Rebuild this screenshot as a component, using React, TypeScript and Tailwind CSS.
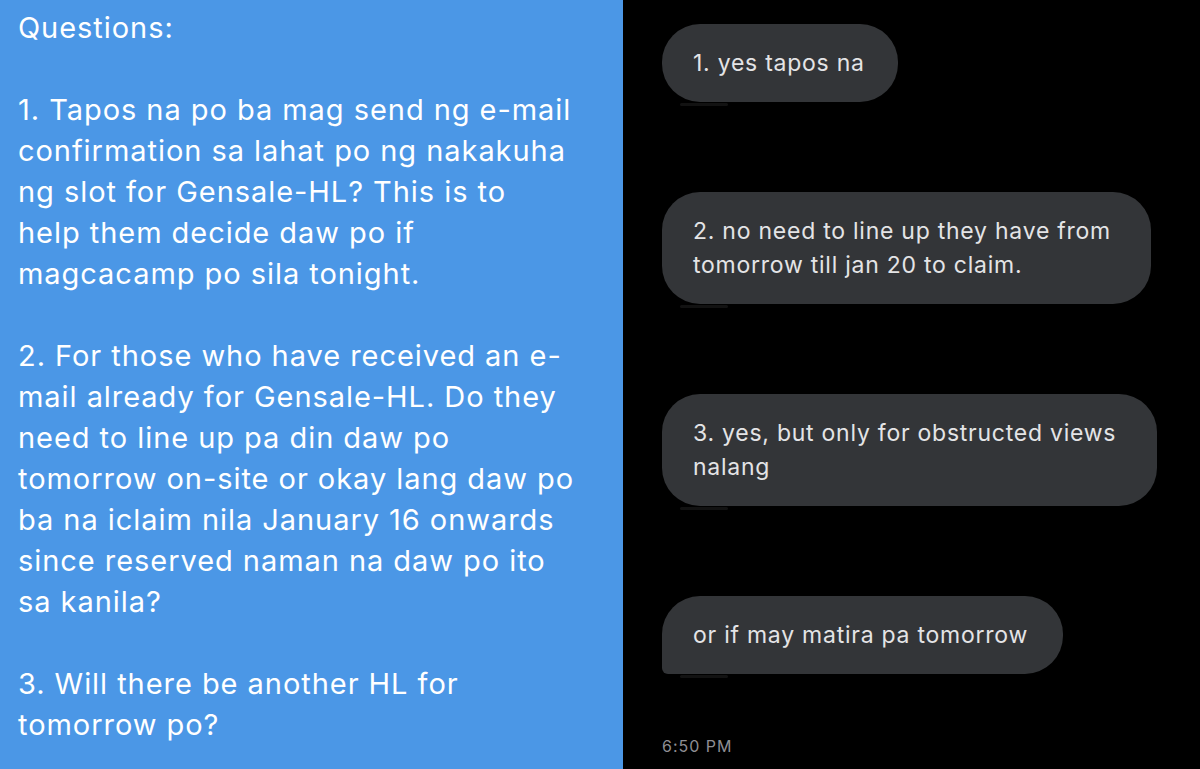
import React from "react";

const leftLines = [
  "Questions:",
  "",
  "1. Tapos na po ba mag send ng e-mail",
  "confirmation sa lahat po ng nakakuha",
  "ng slot for Gensale-HL? This is to",
  "help them decide daw po if",
  "magcacamp po sila tonight.",
  "",
  "2. For those who have received an e-",
  "mail already for Gensale-HL. Do they",
  "need to line up pa din daw po",
  "tomorrow on-site or okay lang daw po",
  "ba na iclaim nila January 16 onwards",
  "since reserved naman na daw po ito",
  "sa kanila?",
  "",
  "3. Will there be another HL for",
  "tomorrow po?",
];

function Bubble({ lines, w, square }: { lines: string[]; w: string; square?: boolean }) {
  return (
    <div className="relative">
      <div
        className={`${w} bg-[#333538] px-[31px] py-[22px] text-[23px] leading-[34px] tracking-[0.75px] text-[#e4e4e6] ${
          square ? "rounded-[38px] rounded-bl-[6px]" : "rounded-[38px]"
        }`}
      >
        {lines.map((l, i) => (
          <div key={i} className="whitespace-nowrap">
            {l}
          </div>
        ))}
      </div>
      <div className="absolute left-[18px] top-full mt-[1px] h-[3px] w-[48px] rounded-full bg-[#121212]" />
    </div>
  );
}

export default function App() {
  return (
    <div
      className="flex h-[769px] w-[1200px] overflow-hidden"
      style={{ fontFamily: "Inter, Roboto, 'Liberation Sans', sans-serif" }}
    >
      <div className="h-full w-[623px] shrink-0 bg-[#4b97e6] pl-[18px] pt-[7px] text-[29px] leading-[41px] tracking-[0.95px] text-white">
        {leftLines.map((l, i) => (
          <div key={i} className="h-[41px] whitespace-nowrap">
            {l}
          </div>
        ))}
      </div>
      <div className="flex h-full flex-1 flex-col items-start bg-black pl-[39px] pt-[24px]">
        <div className="flex flex-col items-start gap-[90px]">
          <Bubble lines={["1. yes tapos na"]} w="w-[236px]" />
          <Bubble lines={["2. no need to line up they have from", "tomorrow till jan 20 to claim."]} w="w-[489px]" />
          <Bubble lines={["3. yes, but only for obstructed views", "nalang"]} w="w-[495px]" />
          <Bubble lines={["or if may matira pa tomorrow"]} w="w-[401px]" square />
        </div>
        <div className="mt-[62px] text-[16px] leading-[20px] tracking-[1px] text-[#8e8e93]">6:50 PM</div>
      </div>
    </div>
  );
}
